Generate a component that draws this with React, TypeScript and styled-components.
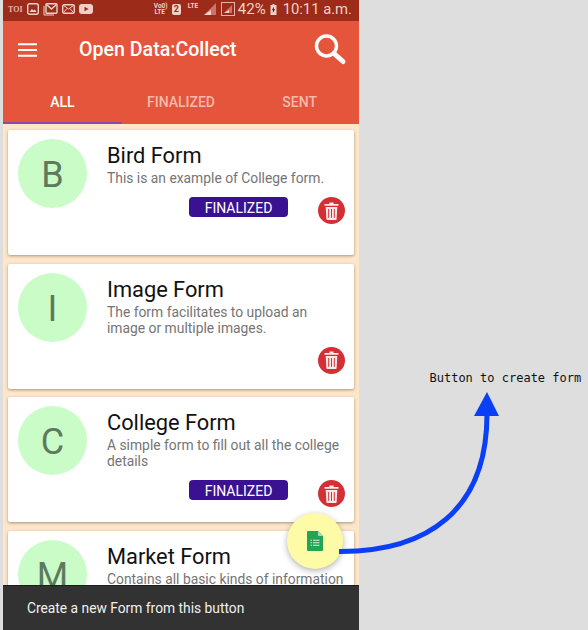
import React from 'react'
import styled, { createGlobalStyle } from 'styled-components'

const GlobalStyle = createGlobalStyle`
  html, body {
    margin: 0;
    padding: 0;
    background: #dedede;
    font-family: Roboto, "Liberation Sans", sans-serif;
  }
`

const Page = styled.div`
  position: relative;
  width: 588px;
  height: 630px;
  overflow: hidden;
  display: flex;
  padding-left: 3px;
  box-sizing: border-box;
`

const Phone = styled.div`
  position: relative;
  width: 356px;
  height: 630px;
  overflow: hidden;
  background: #fde6c9;
  display: flex;
  flex-direction: column;
`

const StatusBar = styled.div`
  height: 21px;
  box-sizing: border-box;
  background: #9c2b1a;
  display: flex;
  align-items: center;
  padding: 0 7px 3px 5px;
  color: #f3cfc8;
  flex-shrink: 0;
`

const StatusLeft = styled.div`
  display: flex;
  align-items: center;
  gap: 4px;
  flex: 1;
`

const StatusRight = styled.div`
  display: flex;
  align-items: center;
`

const Toi = styled.span`
  font-family: "Liberation Serif", serif;
  font-size: 8px;
  font-weight: 700;
  width: 15px;
  color: #e5b3a9;
`

const Volte = styled.span`
  font-size: 6.5px;
  font-weight: 700;
  line-height: 6.5px;
  text-align: center;
  width: 12px;
  margin-right: 6px;
`

const SimTag = styled.span`
  width: 9px;
  height: 11px;
  border-radius: 2px;
  background: #f3cfc8;
  color: #9c2b1a;
  font-size: 9px;
  font-weight: 700;
  line-height: 11px;
  text-align: center;
  margin-right: 7px;
`

const LteTag = styled.span`
  font-size: 6.5px;
  font-weight: 700;
  line-height: 7px;
  width: 12px;
  margin-bottom: 5px;
  margin-right: 4px;
`

const SignalGap = styled.span`
  width: 5px;
`

const Battery = styled.span`
  font-size: 15px;
  margin: 0 4px 0 3px;
`

const Clock = styled.span`
  font-size: 14.8px;
  margin-left: 6px;
  white-space: nowrap;
`

const AppBar = styled.header`
  height: 103px;
  background: #e5553b;
  display: flex;
  flex-direction: column;
  flex-shrink: 0;
`

const TopRow = styled.div`
  height: 58px;
  display: flex;
  align-items: center;
  padding-left: 15px;
  color: #fff;
`

const Title = styled.h1`
  margin: 0 0 1px 42px;
  font-size: 19.6px;
  font-weight: 500;
  line-height: 24px;
  flex: 1;
  white-space: nowrap;
`

const SearchWrap = styled.div`
  width: 33px;
  height: 32px;
  margin-right: 12px;
`

const Tabs = styled.nav`
  flex: 1;
  display: grid;
  grid-template-columns: repeat(3, 1fr);
`

const Tab = styled.div<{ $active?: boolean }>`
  display: flex;
  align-items: center;
  justify-content: center;
  padding-top: 3px;
  font-size: 14px;
  font-weight: 500;
  color: ${props => (props.$active ? '#fff' : '#f6b9ab')};
  border-bottom: 2px solid ${props => (props.$active ? '#8a4aa8' : 'transparent')};
`

const FormList = styled.div`
  display: flex;
  flex-direction: column;
  gap: 8.67px;
  padding: 6px 5px 0;
`

const Card = styled.article`
  height: 125px;
  flex-shrink: 0;
  box-sizing: border-box;
  background: #fff;
  border-radius: 2px;
  box-shadow: 0 1px 3px rgba(90, 70, 40, 0.5);
  padding: 9px 9px 0 10px;
  display: flex;
  gap: 20px;
`

const Avatar = styled.div`
  width: 69px;
  height: 69px;
  box-sizing: border-box;
  padding-top: 3px;
  flex-shrink: 0;
  border-radius: 50%;
  background: #c9fcc6;
  color: #5e7a5e;
  font-size: 36px;
  display: flex;
  align-items: center;
  justify-content: center;
`

const CardBody = styled.div`
  flex: 1;
  min-width: 0;
`

const FormName = styled.h2`
  margin: 4px 0 1px;
  font-size: 21.8px;
  font-weight: 400;
  line-height: 26px;
  color: #111;
`

const FormText = styled.p`
  margin: 0;
  font-size: 13.85px;
  line-height: 16px;
  color: #757575;
`

const CardFooter = styled.div`
  display: flex;
  justify-content: flex-end;
  gap: 30px;
  margin-top: 11px;
`

const Badge = styled.span`
  width: 99px;
  height: 20px;
  border-radius: 4px;
  background: #3a1190;
  color: #fff;
  font-size: 14px;
  line-height: 22px;
  text-align: center;
`

const DeleteButton = styled.div`
  width: 27px;
  height: 27px;
  border-radius: 50%;
  background: #d32f35;
  display: flex;
  align-items: center;
  justify-content: center;
`

const Fab = styled.div`
  position: absolute;
  left: 284px;
  top: 513px;
  width: 56px;
  height: 56px;
  border-radius: 50%;
  background: #fdfba6;
  box-shadow: 0 2px 6px rgba(0, 0, 0, 0.3);
  display: flex;
  align-items: center;
  justify-content: center;
`

const Snackbar = styled.div`
  position: absolute;
  left: 0;
  right: 0;
  bottom: 0;
  height: 45px;
  box-sizing: border-box;
  background: #323232;
  border-top: 1px solid #1c1c1c;
  color: #f0f0f0;
  font-size: 13.8px;
  display: flex;
  align-items: center;
  padding-left: 24px;
`

const Note = styled.div`
  position: absolute;
  left: 429.5px;
  top: 370px;
  font-family: "DejaVu Sans Mono", "Liberation Mono", monospace;
  font-size: 12px;
  line-height: 16px;
  color: #111;
  white-space: pre;
`

const ArrowLayer = styled.svg`
  position: absolute;
  left: 0;
  top: 0;
`

const MenuIcon = () => (
  <svg width="19" height="14" viewBox="0 0 19 14">
    <path d="M0 1.2h19M0 7h19M0 12.8h19" stroke="#fff" strokeWidth="2" />
  </svg>
)

const SearchIcon = () => (
  <svg width="33" height="32" viewBox="0 0 33 32" style={{ display: 'block' }}>
    <circle cx="12.5" cy="12" r="10" fill="none" stroke="#fff" strokeWidth="3.4" />
    <path d="M20 19.5L29 27.5" stroke="#fff" strokeWidth="5" strokeLinecap="round" />
  </svg>
)

const TrashIcon = () => (
  <svg width="15" height="18" viewBox="0 0 15 18">
    <path d="M5.4 2V.6h4.2V2H14.5V3.8H.5V2z" fill="#fbe9e9" />
    <path d="M1.7 5h11.6l-.7 12.2a.8.8 0 0 1-.8.8H3.2a.8.8 0 0 1-.8-.8z" fill="#fbe9e9" />
    <path d="M4.7 7v8.8M7.5 7v8.8M10.3 7v8.8" stroke="#d32f35" strokeWidth="1" />
  </svg>
)

const SheetIcon = () => (
  <svg width="16" height="20" viewBox="0 0 16 20">
    <path d="M1 0h10l5 5v14a1 1 0 0 1-1 1H1a1 1 0 0 1-1-1V1a1 1 0 0 1 1-1z" fill="#23a455" />
    <path d="M11 0l5 5h-4a1 1 0 0 1-1-1z" fill="#a5dcb8" />
    <path d="M3.5 9.2h1.4M6 9.2h6.5M3.5 11.7h1.4M6 11.7h6.5M3.5 14.2h1.4M6 14.2h6.5" stroke="#d5f0df" strokeWidth="1.1" />
  </svg>
)

const PictureGlyph = () => (
  <svg width="12" height="12" viewBox="0 0 12 12">
    <rect x="0.7" y="0.7" width="10.6" height="10.6" rx="2" fill="none" stroke="#f3cfc8" strokeWidth="1.4" />
    <path d="M2.5 9l2.3-3 1.7 1.6 1.3-1 1.7 2.4z" fill="#f3cfc8" />
  </svg>
)

const MailStackGlyph = () => (
  <svg width="15" height="13" viewBox="0 0 15 13">
    <path d="M1 3v9h10" fill="none" stroke="#f3cfc8" strokeWidth="1" />
    <rect x="3" y="0.7" width="11" height="9.6" rx="1" fill="none" stroke="#f3cfc8" strokeWidth="1.4" />
    <path d="M3.5 1.5L8.5 6l5-4.5" fill="none" stroke="#f3cfc8" strokeWidth="1.4" />
  </svg>
)

const EnvelopeGlyph = () => (
  <svg width="13" height="10" viewBox="0 0 13 10">
    <rect x="0.7" y="0.7" width="11.6" height="8.6" rx="1.5" fill="none" stroke="#f3cfc8" strokeWidth="1.4" />
    <path d="M1.5 1.5L6.5 5l5-3.5M1.5 8.5L5 4.5M11.5 8.5L8 4.5" fill="none" stroke="#f3cfc8" strokeWidth="1" />
  </svg>
)

const VideoGlyph = () => (
  <svg width="14" height="10" viewBox="0 0 14 10">
    <rect width="14" height="10" rx="3" fill="#f3cfc8" />
    <path d="M5.5 2.8L9.5 5l-4 2.2z" fill="#9c2b1a" />
  </svg>
)

const SignalGlyph = () => (
  <svg width="12" height="12" viewBox="0 0 12 12">
    <path d="M0 12h12V0z" fill="#c9756a" />
    <path d="M0 12h7V7z" fill="#f3cfc8" />
  </svg>
)

const BoxedSignalGlyph = () => (
  <svg width="14" height="14" viewBox="0 0 14 14">
    <rect x="0.5" y="0.5" width="13" height="13" fill="none" stroke="#e5b3a9" strokeWidth="1" />
    <path d="M3 11h8V3z" fill="#c9756a" />
    <path d="M3 11h5V8z" fill="#f3cfc8" />
  </svg>
)

const BatteryGlyph = () => (
  <svg width="7" height="11" viewBox="0 0 6 11">
    <path d="M2 0h2v1h2v10H0V1h2z" fill="#f3cfc8" />
    <path d="M3.6 2.5L1.4 6.3h1.3L2.2 9l2.4-3.8H3.3z" fill="#222" />
  </svg>
)

interface FormItem {
  letter: string
  name: string
  text: string
  finalized?: boolean
}

const forms: FormItem[] = [
  { letter: 'B', name: 'Bird Form', text: 'This is an example of College form.', finalized: true },
  { letter: 'I', name: 'Image Form', text: 'The form facilitates to upload an image or multiple images.' },
  { letter: 'C', name: 'College Form', text: 'A simple form to fill out all the college details', finalized: true },
  { letter: 'M', name: 'Market Form', text: 'Contains all basic kinds of information' },
]

const App = () => {
  return (
    <Page>
      <GlobalStyle />
      <Phone>
        <StatusBar>
          <StatusLeft>
            <Toi>TOI</Toi>
            <PictureGlyph />
            <MailStackGlyph />
            <EnvelopeGlyph />
            <VideoGlyph />
          </StatusLeft>
          <StatusRight>
            <Volte>Vo0)<br />LTE</Volte>
            <SimTag>2</SimTag>
            <LteTag>LTE</LteTag>
            <SignalGlyph />
            <SignalGap />
            <BoxedSignalGlyph />
            <Battery>42%</Battery>
            <BatteryGlyph />
            <Clock>10:11 a.m.</Clock>
          </StatusRight>
        </StatusBar>
        <AppBar>
          <TopRow>
            <MenuIcon />
            <Title>Open Data:Collect</Title>
            <SearchWrap><SearchIcon /></SearchWrap>
          </TopRow>
          <Tabs>
            <Tab $active>ALL</Tab>
            <Tab>FINALIZED</Tab>
            <Tab>SENT</Tab>
          </Tabs>
        </AppBar>
        <FormList>
          {forms.map(form => (
            <Card key={form.name}>
              <Avatar>{form.letter}</Avatar>
              <CardBody>
                <FormName>{form.name}</FormName>
                <FormText>{form.text}</FormText>
                <CardFooter>
                  {form.finalized && <Badge>FINALIZED</Badge>}
                  <DeleteButton><TrashIcon /></DeleteButton>
                </CardFooter>
              </CardBody>
            </Card>
          ))}
        </FormList>
        <Fab><SheetIcon /></Fab>
        <Snackbar>Create a new Form from this button</Snackbar>
      </Phone>
      <ArrowLayer width="588" height="630" viewBox="0 0 588 630">
        <path d="M339 551.5C428 552 487 510 487 414" fill="none" stroke="#0a3ff5" strokeWidth="5" />
        <path d="M487 392L499 416H474z" fill="#0a3ff5" />
      </ArrowLayer>
      <Note>Button to create form</Note>
    </Page>
  )
}

export default App
